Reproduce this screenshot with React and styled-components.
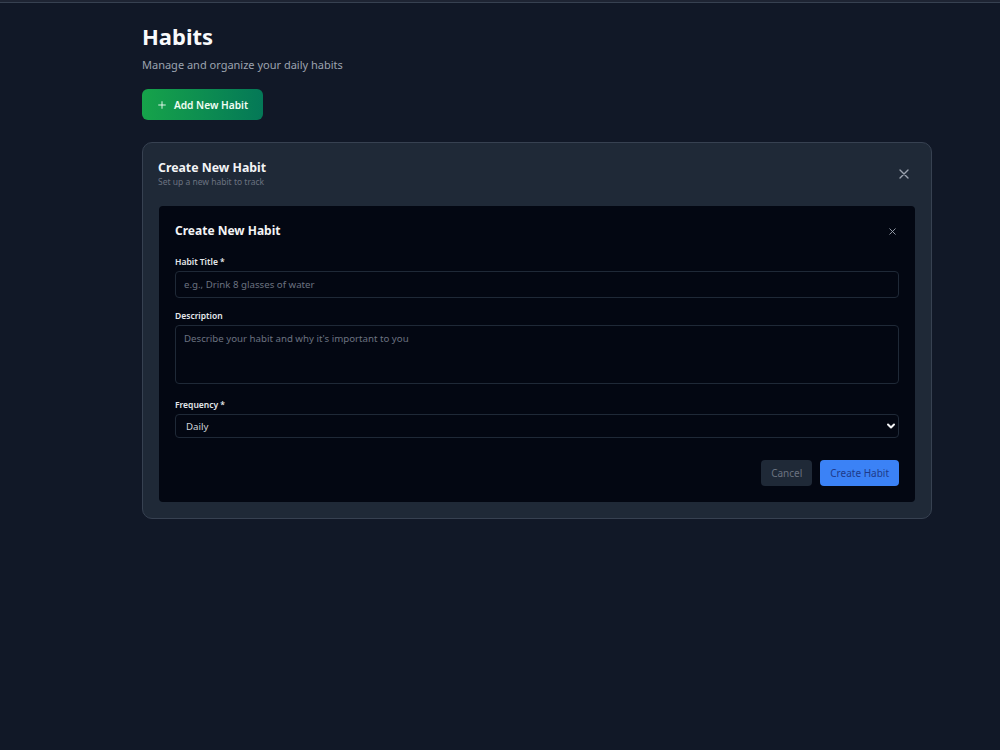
import React from "react";
import styled, { createGlobalStyle } from "styled-components";

const Global = createGlobalStyle`
  html, body { margin: 0; padding: 0; background: #111827; }
  body { font-family: "Noto Sans", "Open Sans", sans-serif; color: #f9fafb; }
  * { box-sizing: border-box; }
`;

const Page = styled.div`
  min-height: 750px;
  background: #111827;
`;

const TopBar = styled.div`
  height: 3px;
  background: #1e2433;
  border-bottom: 1px solid #374151;
`;

const Main = styled.main`
  padding: 19px 68px 0 142px;
`;

const Title = styled.h1`
  margin: 0;
  font-size: 22px;
  font-weight: 700;
  line-height: 28px;
  color: #f9fafb;
`;

const Subtitle = styled.p`
  margin: 7px 0 0 0;
  font-size: 11px;
  line-height: 16px;
  color: #9ca3af;
`;

const AddButton = styled.button`
  margin-top: 16px;
  height: 31px;
  width: 121px;
  border: none;
  border-radius: 6px;
  background: linear-gradient(90deg, #16a34a, #047857);
  color: #f0fdf4;
  font-family: inherit;
  font-size: 10.2px;
  font-weight: 600;
  display: flex;
  align-items: center;
  justify-content: center;
  gap: 7px;
  cursor: pointer;
`;

const Card = styled.section`
  margin-top: 22px;
  background: #1f2937;
  border: 1px solid #374151;
  border-radius: 10px;
  padding: 16px;
`;

const CardHeader = styled.div`
  display: flex;
  justify-content: space-between;
  align-items: center;
  padding-bottom: 18px;
`;

const HeaderText = styled.div`
  display: flex;
  flex-direction: column;
`;

const CardTitle = styled.h2`
  margin: 0 0 0 -1px;
  font-size: 12.3px;
  font-weight: 700;
  line-height: 17px;
  color: #f3f4f6;
`;

const CardSub = styled.span`
  margin-left: -1px;
  font-size: 8.5px;
  line-height: 12px;
  color: #6b7280;
`;

const CloseBtn = styled.button`
  background: none;
  border: none;
  padding: 0;
  margin-right: ${(p) => p.$mr || 0}px;
  color: #9ca3af;
  display: flex;
  cursor: pointer;
`;

const Panel = styled.div`
  background: #030712;
  border-radius: 4px;
  padding: 17px 16px 16px 16px;
`;

const PanelHeader = styled.div`
  display: flex;
  justify-content: space-between;
  align-items: center;
  margin-bottom: 17px;
`;

const PanelTitle = styled.h3`
  margin: 0;
  font-size: 12px;
  font-weight: 700;
  line-height: 16px;
  color: #f3f4f6;
`;

const Field = styled.div`
  display: flex;
  flex-direction: column;
  gap: 3px;
  margin-bottom: ${(p) => p.$mb ?? 12}px;
`;

const Label = styled.label`
  font-size: 8.5px;
  font-weight: 600;
  line-height: 12px;
  color: #e5e7eb;
`;

const inputBase = `
  display: block;
  width: 100%;
  background: #030712;
  border: 1px solid #1f2937;
  border-radius: 4px;
  color: #e5e7eb;
  font-family: inherit;
  font-size: 9.7px;
  outline: none;
  margin: 0;
  &::placeholder { color: #6b7280; }
`;

const Input = styled.input`
  ${inputBase}
  height: 27px;
  padding: 0 8px;
`;

const TextArea = styled.textarea`
  ${inputBase}
  height: 59px;
  padding: 6px 8px;
  resize: none;
  line-height: 14px;
`;

const SelectWrap = styled.div`
  position: relative;
`;

const Select = styled.select`
  ${inputBase}
  height: 24px;
  padding: 0 10px;
  appearance: none;
  color: #d1d5db;
`;

const Chevron = styled.svg`
  position: absolute;
  right: 3px;
  top: 8px;
  pointer-events: none;
`;

const Actions = styled.div`
  display: flex;
  justify-content: flex-end;
  gap: 8px;
  margin-top: 22px;
`;

const Btn = styled.button`
  height: 26px;
  padding: 0 10px;
  border: none;
  border-radius: 4px;
  font-family: inherit;
  font-size: 10px;
  background: ${(p) => (p.$primary ? "#3b82f6" : "#1f2937")};
  color: ${(p) => (p.$primary ? "#1e3a8a" : "#6b7280")};
  cursor: pointer;
`;

const XIcon = ({ size }) => (
  <svg width={size} height={size} viewBox="0 0 24 24" fill="none" stroke="currentColor" strokeWidth="2" strokeLinecap="round">
    <path d="M18 6 6 18M6 6l12 12" />
  </svg>
);

export default function App() {
  return (
    <Page>
      <Global />
      <TopBar />
      <Main>
        <Title>Habits</Title>
        <Subtitle>Manage and organize your daily habits</Subtitle>
        <AddButton>
          <svg width="10" height="10" viewBox="0 0 24 24" fill="none" stroke="currentColor" strokeWidth="2.2" strokeLinecap="round">
            <path d="M12 4v16M4 12h16" />
          </svg>
          Add New Habit
        </AddButton>
        <Card>
          <CardHeader>
            <HeaderText>
              <CardTitle>Create New Habit</CardTitle>
              <CardSub>Set up a new habit to track</CardSub>
            </HeaderText>
            <CloseBtn $mr={3}><XIcon size={16} /></CloseBtn>
          </CardHeader>
          <Panel>
            <PanelHeader>
              <PanelTitle>Create New Habit</PanelTitle>
              <CloseBtn $mr={1}><XIcon size={11} /></CloseBtn>
            </PanelHeader>
            <Field>
              <Label>Habit Title *</Label>
              <Input placeholder="e.g., Drink 8 glasses of water" />
            </Field>
            <Field $mb={15}>
              <Label>Description</Label>
              <TextArea placeholder="Describe your habit and why it's important to you" />
            </Field>
            <Field $mb={0}>
              <Label>Frequency *</Label>
              <SelectWrap>
                <Select defaultValue="daily">
                  <option value="daily">Daily</option>
                  <option value="weekly">Weekly</option>
                </Select>
                <Chevron width="10" height="8" viewBox="0 0 10 8" fill="none" stroke="#f3f4f6" strokeWidth="2" strokeLinecap="round" strokeLinejoin="round">
                  <path d="M2 2.5 5 5.5 8 2.5" />
                </Chevron>
              </SelectWrap>
            </Field>
            <Actions>
              <Btn>Cancel</Btn>
              <Btn $primary>Create Habit</Btn>
            </Actions>
          </Panel>
        </Card>
      </Main>
    </Page>
  );
}
